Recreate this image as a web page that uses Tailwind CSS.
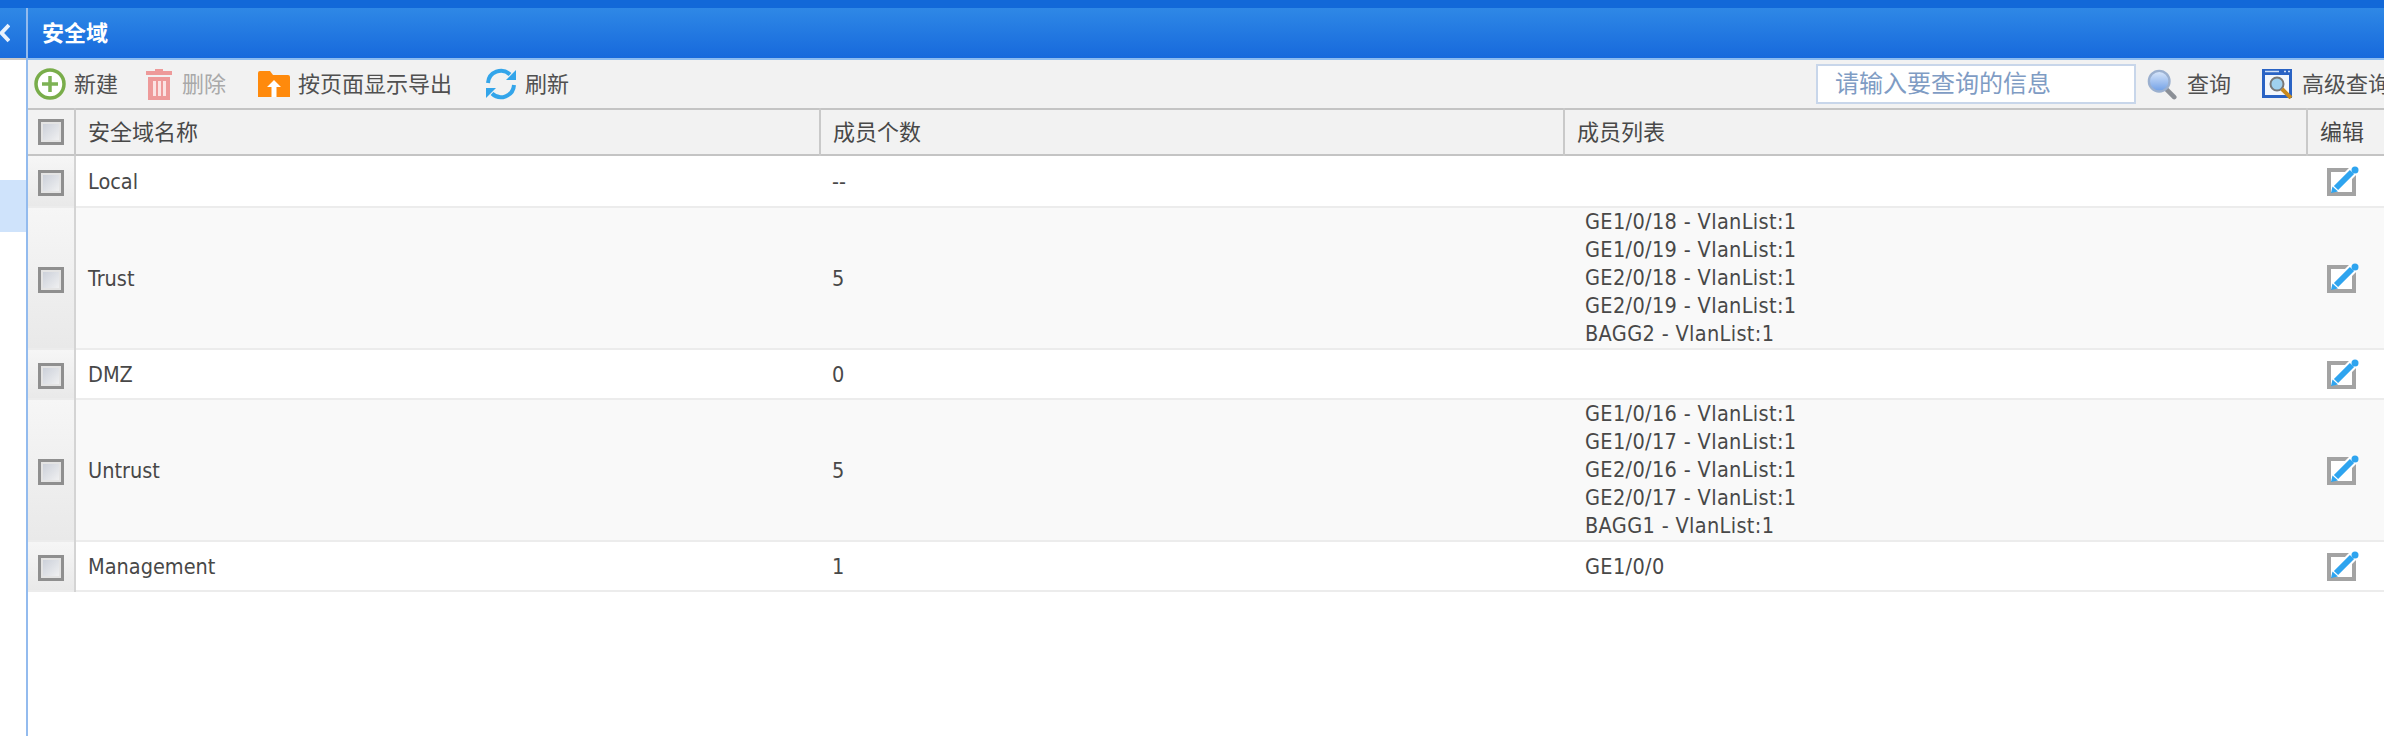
<!DOCTYPE html>
<html lang="zh-CN">
<head>
  <meta charset="UTF-8">
  <title>安全域</title>
  <script src="https://cdn.jsdelivr.net/npm/@tailwindcss/browser@4"></script>
</head>
<body class="h-screen overflow-hidden bg-white font-['DejaVu_Sans_Condensed','Noto_Sans_CJK_SC',sans-serif] text-[21.5px] text-[#484848]">
  <svg class="hidden">
    <symbol id="edit" viewBox="0 0 32 30">
      <path d="M2 4h25v24H2z" fill="#fff" stroke="#a3a3a3" stroke-width="4"/>
      <path d="M9 22 27 4" stroke="#fff" stroke-width="10" fill="none"/>
      <path d="M9 22 25 6" stroke="#2ea4ef" stroke-width="6" fill="none"/>
      <path d="M4 27 5.500 20.500 11 25.500z" fill="#2ea4ef"/>
      <circle cx="28" cy="4" r="3.500" fill="#2ea4ef"/>
    </symbol>
  </svg>

  <div class="h-2 bg-[#1268d8]"></div>
  <div class="flex h-[728px]">
    <!-- collapsed nav -->
    <aside class="w-[28px] shrink-0 border-r-2 border-[#93bbee]">
      <div class="flex h-[50px] items-center bg-linear-to-b from-[#2f88e6] to-[#1a6cdc]">
        <svg class="h-[22px] w-[10px]" viewBox="0 0 10 22"><path d="M9 3 1.500 11 9 19" fill="none" stroke="#e8f1fc" stroke-width="4"/></svg>
      </div>
      <div class="h-0.5 bg-[#c9c9c9]"></div>
      <div class="mt-[120px] h-[52px] bg-[#cfe3fb]"></div>
    </aside>

    <main class="min-w-0 flex-1 overflow-hidden">
      <div class="flex h-[50px] items-center bg-linear-to-b from-[#2f88e6] to-[#1769dc] pl-[14px] text-[22px] font-bold text-white">安全域</div>
      <div class="h-0.5 bg-[#8dbcf0]"></div>

      <!-- toolbar -->
      <div class="flex h-[48px] items-center whitespace-nowrap bg-[#f2f2f2] text-[22px] text-[#505050]">
        <div class="ml-[6px] flex items-center gap-2">
          <svg class="size-8" viewBox="0 0 32 32"><circle cx="16" cy="16" r="14" fill="#fff" stroke="#79ad4a" stroke-width="3.500"/><path d="M16 8v16M8 16h16" stroke="#7eb255" stroke-width="3.500"/></svg>
          <span>新建</span>
        </div>
        <div class="ml-7 flex items-center gap-2.5 text-[#a9a9a9]">
          <svg class="h-8 w-[26px]" viewBox="0 0 26 32"><path d="M9 3V1h8v2h9v4H0V3z" fill="#ee9a9a"/><path d="M2 9h22v23H2z" fill="#ee9a9a"/><path d="M7 13h3v15H7zM12 13h3v15h-3zM17 13h3v15h-3z" fill="#fbe3e3"/></svg>
          <span>删除</span>
        </div>
        <div class="ml-8 flex items-center gap-2">
          <svg class="h-[26px] w-8" viewBox="0 0 32 26"><path d="M0 2q0-2 2-2h10l3 4h15q2 0 2 2v20H0z" fill="#ff8a0c"/><path d="M16 9l7 7h-4.500v10h-5V16H9z" fill="#fff"/></svg>
          <span>按页面显示导出</span>
        </div>
        <div class="ml-[33px] flex items-center gap-2">
          <svg class="size-8" viewBox="0 0 32 32" fill="none" stroke="#33a5ea" stroke-width="4"><path d="M3 15A13 13 0 0 1 25 6.500"/><path d="M29 17A13 13 0 0 1 7 25.500"/><path d="M31 2v10H21z" fill="#33a5ea" stroke="none"/><path d="M1 30V20h10z" fill="#33a5ea" stroke="none"/></svg>
          <span>刷新</span>
        </div>
        <div class="ml-auto flex items-center">
          <input class="h-10 w-[320px] border-2 border-[#c8d6ea] bg-white pl-[17px] text-[24px] outline-none placeholder:text-[#7f9cc4]" placeholder="请输入要查询的信息">
          <svg class="ml-[11px] h-8 w-[30px]" viewBox="0 0 32 32"><defs><linearGradient id="lens" x1="0" y1="0" x2="0" y2="1"><stop offset="0" stop-color="#dbe8fb"/><stop offset="1" stop-color="#6f9fe6"/></linearGradient></defs><path d="M20 21l9 9" stroke="#8b8f96" stroke-width="5" stroke-linecap="round"/><circle cx="13" cy="13" r="11" fill="url(#lens)" stroke="#9bb0cf" stroke-width="2.500"/></svg>
          <span class="ml-2.5">查询</span>
          <svg class="ml-[31px] h-[30px] w-8" viewBox="0 0 32 30"><path d="M0 0h30v29H0z" fill="#2a63c4"/><path d="M3 6h24v20H3z" fill="#f3f7fc"/><path d="M3 2.500h14M22 2.500h2M26 2.500h2" stroke="#cfe0f7" stroke-width="1.500"/><circle cx="15" cy="15" r="6.500" fill="#9fd0ee" stroke="#777" stroke-width="2"/><path d="M20 20l9 9" stroke="#c98a1c" stroke-width="4"/></svg>
          <span class="ml-2 w-[82px] overflow-hidden">高级查询</span>
        </div>
      </div>

      <!-- zone table -->
      <table class="w-full table-fixed border-collapse text-left">
        <colgroup>
          <col class="w-[47px]">
          <col class="w-[745px]">
          <col class="w-[744px]">
          <col class="w-[743px]">
          <col>
        </colgroup>
        <thead>
          <tr class="h-[46px] border-y-2 border-[#c4c4c4] bg-[#f2f2f2] text-[22px] font-normal">
            <th class="border-r-2 border-[#c9c9c9] font-normal"><div class="mx-auto size-[26px] border-[3px] border-[#8f8f8f] bg-linear-to-br from-[#c8cdd7] to-[#f4f4f4] shadow-[inset_0_0_0_2px_#e4e4e4]"></div></th>
            <th class="border-r-2 border-[#c9c9c9] pl-3 font-normal">安全域名称</th>
            <th class="border-r-2 border-[#c9c9c9] pl-3 font-normal">成员个数</th>
            <th class="border-r-2 border-[#c9c9c9] pl-3 font-normal">成员列表</th>
            <th class="pl-3 font-normal">编辑</th>
          </tr>
        </thead>
        <tbody>
          <tr class="h-[52px] border-b-2 border-[#ececec] bg-white">
            <td class="border-r-2 border-[#d4d4d4] bg-linear-to-b from-[#f6f6f6] to-[#e9e9e9] pt-[3px]"><div class="mx-auto size-[26px] border-[3px] border-[#8f8f8f] bg-linear-to-br from-[#c8cdd7] to-[#f4f4f4] shadow-[inset_0_0_0_2px_#e4e4e4]"></div></td>
            <td class="pt-[3px] pl-3">Local</td>
            <td class="pt-[3px] pl-3">--</td>
            <td class="pl-[21px]"></td>
            <td class="pl-5"><svg class="block h-[30px] w-8"><use href="#edit"/></svg></td>
          </tr>
          <tr class="h-[142px] border-b-2 border-[#ececec] bg-[#f9f9f9]">
            <td class="border-r-2 border-[#d4d4d4] bg-linear-to-b from-[#f6f6f6] to-[#e9e9e9] pt-[3px]"><div class="mx-auto size-[26px] border-[3px] border-[#8f8f8f] bg-linear-to-br from-[#c8cdd7] to-[#f4f4f4] shadow-[inset_0_0_0_2px_#e4e4e4]"></div></td>
            <td class="pt-[3px] pl-3">Trust</td>
            <td class="pt-[3px] pl-3">5</td>
            <td class="pl-[21px] leading-[28px] tracking-[0.35px]">GE1/0/18 - VlanList:1<br>GE1/0/19 - VlanList:1<br>GE2/0/18 - VlanList:1<br>GE2/0/19 - VlanList:1<br>BAGG2 - VlanList:1</td>
            <td class="pl-5"><svg class="block h-[30px] w-8"><use href="#edit"/></svg></td>
          </tr>
          <tr class="h-[50px] border-b-2 border-[#ececec] bg-white">
            <td class="border-r-2 border-[#d4d4d4] bg-linear-to-b from-[#f6f6f6] to-[#e9e9e9] pt-[3px]"><div class="mx-auto size-[26px] border-[3px] border-[#8f8f8f] bg-linear-to-br from-[#c8cdd7] to-[#f4f4f4] shadow-[inset_0_0_0_2px_#e4e4e4]"></div></td>
            <td class="pt-[3px] pl-3">DMZ</td>
            <td class="pt-[3px] pl-3">0</td>
            <td class="pl-[21px]"></td>
            <td class="pl-5"><svg class="block h-[30px] w-8"><use href="#edit"/></svg></td>
          </tr>
          <tr class="h-[142px] border-b-2 border-[#ececec] bg-[#f9f9f9]">
            <td class="border-r-2 border-[#d4d4d4] bg-linear-to-b from-[#f6f6f6] to-[#e9e9e9] pt-[3px]"><div class="mx-auto size-[26px] border-[3px] border-[#8f8f8f] bg-linear-to-br from-[#c8cdd7] to-[#f4f4f4] shadow-[inset_0_0_0_2px_#e4e4e4]"></div></td>
            <td class="pt-[3px] pl-3">Untrust</td>
            <td class="pt-[3px] pl-3">5</td>
            <td class="pl-[21px] leading-[28px] tracking-[0.35px]">GE1/0/16 - VlanList:1<br>GE1/0/17 - VlanList:1<br>GE2/0/16 - VlanList:1<br>GE2/0/17 - VlanList:1<br>BAGG1 - VlanList:1</td>
            <td class="pl-5"><svg class="block h-[30px] w-8"><use href="#edit"/></svg></td>
          </tr>
          <tr class="h-[50px] border-b-2 border-[#ececec] bg-white">
            <td class="border-r-2 border-[#d4d4d4] bg-linear-to-b from-[#f6f6f6] to-[#e9e9e9] pt-[3px]"><div class="mx-auto size-[26px] border-[3px] border-[#8f8f8f] bg-linear-to-br from-[#c8cdd7] to-[#f4f4f4] shadow-[inset_0_0_0_2px_#e4e4e4]"></div></td>
            <td class="pt-[3px] pl-3">Management</td>
            <td class="pt-[3px] pl-3">1</td>
            <td class="pt-[3px] pl-[21px] tracking-[0.35px]">GE1/0/0</td>
            <td class="pl-5"><svg class="block h-[30px] w-8"><use href="#edit"/></svg></td>
          </tr>
        </tbody>
      </table>
    </main>
  </div>
</body>
</html>
